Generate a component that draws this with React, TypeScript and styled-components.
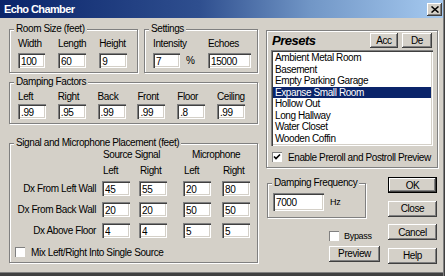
import { Fragment } from "react"
import styled, { createGlobalStyle } from "styled-components"

const presets = [
    "Ambient Metal Room",
    "Basement",
    "Empty Parking Garage",
    "Expanse Small Room",
    "Hollow Out",
    "Long Hallway",
    "Water Closet",
    "Wooden Coffin",
]

const damping = [
    { label: "Left", value: ".99" },
    { label: "Right", value: ".95" },
    { label: "Back", value: ".99" },
    { label: "Front", value: ".99" },
    { label: "Floor", value: ".8" },
    { label: "Ceiling", value: ".99" },
]

const placement = [
    { label: "Dx From Left Wall", values: ["45", "55", "20", "80"] },
    { label: "Dx From Back Wall", values: ["20", "20", "50", "50"] },
    { label: "Dx Above Floor", values: ["4", "4", "5", "5"] },
]

const Check = ({ checked }: { checked?: boolean }) => (
    <CheckBox>
        {checked && (
            <svg width="8" height="8" viewBox="0 0 8 8">
                <path d="M1 3.5 L3 5.5 L7 1.5" stroke="#000" strokeWidth="1.6" fill="none" />
            </svg>
        )}
    </CheckBox>
)

const App = () => {
    return (
        <>
            <GlobalStyle />
            <Window>
                <TitleBar>
                    <Title>Echo Chamber</Title>
                    <CloseButton>
                        <svg width="8" height="7" viewBox="0 0 8 7">
                            <path d="M0.5 0.5 L7.5 6.5 M7.5 0.5 L0.5 6.5" stroke="#000" strokeWidth="1.5" />
                        </svg>
                    </CloseButton>
                </TitleBar>
                <Body>
                    <LeftCol>
                        <TopRow>
                            <Group $w={129}>
                                <Legend>Room Size (feet)</Legend>
                                <FieldRow $gap={13}>
                                    <Field>
                                        <Caption>Width</Caption>
                                        <TextBox $w={27} defaultValue="100" />
                                    </Field>
                                    <Field>
                                        <Caption>Length</Caption>
                                        <TextBox $w={28} defaultValue="60" />
                                    </Field>
                                    <Field>
                                        <Caption>Height</Caption>
                                        <TextBox $w={28} defaultValue="9" />
                                    </Field>
                                </FieldRow>
                            </Group>
                            <Group $w={114}>
                                <Legend>Settings</Legend>
                                <SettingsGrid>
                                    <Caption>Intensity</Caption>
                                    <span />
                                    <Caption>Echoes</Caption>
                                    <TextBox $w={27} defaultValue="7" />
                                    <Unit>%</Unit>
                                    <TextBox $w={43} defaultValue="15000" />
                                </SettingsGrid>
                            </Group>
                        </TopRow>
                        <Group $w={249} $top={3}>
                            <Legend>Damping Factors</Legend>
                            <DampingGrid>
                                {damping.map((d) => (
                                    <Field key={d.label} $gap={1}>
                                        <Caption>{d.label}</Caption>
                                        <TextBox $w={28} defaultValue={d.value} />
                                    </Field>
                                ))}
                            </DampingGrid>
                        </Group>
                        <Group $w={249} $top={13}>
                            <Legend>Signal and Microphone Placement (feet)</Legend>
                            <PlacementGrid>
                                <span />
                                <Heading $span={2} $pad={1}>Source Signal</Heading>
                                <Heading $span={2} $pad={9}>Microphone</Heading>
                                <span />
                                <SubHead>Left</SubHead>
                                <SubHead>Right</SubHead>
                                <SubHead>Left</SubHead>
                                <SubHead>Right</SubHead>
                                {placement.map((row) => (
                                    <Fragment key={row.label}>
                                        <RowLabel>{row.label}</RowLabel>
                                        {row.values.map((v, i) => (
                                            <TextBox key={i} $w={28} defaultValue={v} />
                                        ))}
                                    </Fragment>
                                ))}
                            </PlacementGrid>
                            <CheckRow $pad="8px 0 4px 5px">
                                <Check />
                                <span>Mix Left/Right Into Single Source</span>
                            </CheckRow>
                        </Group>
                    </LeftCol>
                    <RightCol>
                        <PresetsBox>
                            <PresetsHeader>
                                <PresetsTitle>Presets</PresetsTitle>
                                <Button $w={28} $h={15}>Acc</Button>
                                <Button $w={30} $h={15}>De</Button>
                            </PresetsHeader>
                            <List>
                                {presets.map((p, i) => (
                                    <ListItem key={p} $selected={i === 3}>{p}</ListItem>
                                ))}
                            </List>
                            <CheckRow $pad="5px 0 4px 5px">
                                <Check checked />
                                <span>Enable Preroll and Postroll Preview</span>
                            </CheckRow>
                        </PresetsBox>
                        <BottomArea>
                            <LeftPart>
                                <Group $w={99} $left={1}>
                                    <Legend>Damping Frequency</Legend>
                                    <FreqRow>
                                        <TextBox $w={51} $h={18} defaultValue="7000" />
                                        <SmallText>Hz</SmallText>
                                    </FreqRow>
                                </Group>
                                <ActionStack>
                                    <BypassRow>
                                        <Check />
                                        <SmallText>Bypass</SmallText>
                                    </BypassRow>
                                    <Button $w={51} $h={16}>Preview</Button>
                                </ActionStack>
                            </LeftPart>
                            <ButtonColumn>
                                <Button $w={49} $h={16} $default>OK</Button>
                                <Button $w={49} $h={16}>Close</Button>
                                <Button $w={49} $h={16}>Cancel</Button>
                                <Button $w={49} $h={16}>Help</Button>
                            </ButtonColumn>
                        </BottomArea>
                    </RightCol>
                </Body>
            </Window>
        </>
    )
}

const GlobalStyle = createGlobalStyle`
html, body {
    margin: 0;
    padding: 0;
    background: #d4d0c8;
}
body {
    font-family: "Liberation Sans", Arial, sans-serif;
    font-size: 10px;
    letter-spacing: -0.4px;
    color: #000;
}
* {
    box-sizing: border-box;
}
`

const Window = styled.div`
width: 445px;
height: 276px;
background: #d4d0c8;
padding: 0 2px 4px 0;
display: flex;
flex-direction: column;
overflow: hidden;
box-shadow: inset -1px 0 0 #404040, inset -2px 0 0 #808080, inset 0 -3px 0 #404040, inset 0 -4px 0 #808080;
`

const TitleBar = styled.div`
height: 18px;
display: flex;
align-items: center;
justify-content: space-between;
padding: 0 1px 0 4px;
background: linear-gradient(to right, #0a246a 0%, #2f4f8f 45%, #7196c6 70%, #a6caf0 100%);
`

const Title = styled.span`
color: #fff;
font-weight: bold;
font-size: 11px;
letter-spacing: -0.6px;
`

const CloseButton = styled.div`
width: 15px;
height: 13px;
display: flex;
align-items: center;
justify-content: center;
background: #d4d0c8;
box-shadow: inset -1px -1px 0 #404040, inset 1px 1px 0 #fff, inset -2px -2px 0 #808080;
`

const Body = styled.div`
display: flex;
gap: 8px;
padding: 5px 0 0 9px;
`

const LeftCol = styled.div`
width: 249px;
display: flex;
flex-direction: column;
`

const TopRow = styled.div`
display: flex;
gap: 6px;
`

const Group = styled.fieldset<{ $w: number; $top?: number; $left?: number }>`
margin: ${p => p.$top ?? 0}px 0 0 ${p => p.$left ?? 0}px;
padding: 0;
min-width: 0;
width: ${p => p.$w}px;
border: 1px solid #808080;
box-shadow: inset 1px 1px 0 #fff, 1px 1px 0 #fff;
`

const Legend = styled.legend`
margin-left: 4px;
padding: 0 2px;
line-height: 12px;
background: #d4d0c8;
white-space: nowrap;
`

const Caption = styled.div`
line-height: 12px;
white-space: nowrap;
`

const FieldRow = styled.div<{ $gap: number }>`
display: flex;
gap: ${p => p.$gap}px;
padding: 3px 0 4px 8px;
`

const Field = styled.div<{ $gap?: number }>`
display: flex;
flex-direction: column;
gap: ${p => p.$gap ?? 3}px;
`

const TextBox = styled.input<{ $w: number; $h?: number }>`
width: ${p => p.$w}px;
height: ${p => p.$h ?? 15}px;
margin: 0;
border: none;
padding: 1px 3px 0;
font: inherit;
letter-spacing: inherit;
color: #000;
background: #fff;
outline: none;
box-shadow: inset 1px 1px 0 #808080, inset 2px 2px 0 #404040, inset -1px -1px 0 #fff, inset -2px -2px 0 #d4d0c8;
`

const SettingsGrid = styled.div`
display: grid;
grid-template-columns: 27px 28px 43px;
row-gap: 3px;
padding: 3px 0 4px 8px;
`

const Unit = styled.span`
padding-left: 6px;
line-height: 15px;
`

const DampingGrid = styled.div`
display: grid;
grid-template-columns: repeat(6, 28px);
column-gap: 11.8px;
padding: 3px 0 4px 8px;
`

const PlacementGrid = styled.div`
display: grid;
grid-template-columns: 92px 37px 44px 39px 29px;
grid-template-rows: 12px 16px 19px 21px 21px;
align-items: end;
`

const Heading = styled.div<{ $span: number; $pad: number }>`
grid-column: span ${p => p.$span};
padding-left: ${p => p.$pad}px;
line-height: 12px;
white-space: nowrap;
`

const SubHead = styled.div`
line-height: 12px;
padding-left: 1px;
`

const RowLabel = styled.div`
line-height: 15px;
text-align: right;
padding-right: 6px;
white-space: nowrap;
`

const CheckRow = styled.div<{ $pad: string }>`
display: flex;
align-items: center;
gap: 6px;
height: 12px;
box-sizing: content-box;
padding: ${p => p.$pad};
white-space: nowrap;
`

const CheckBox = styled.div`
width: 10px;
height: 10px;
flex: none;
display: flex;
align-items: center;
justify-content: center;
background: #fff;
box-shadow: inset 1px 1px 0 #808080, inset -1px -1px 0 #fff;
`

const RightCol = styled.div`
width: 172px;
display: flex;
flex-direction: column;
`

const PresetsBox = styled.div`
margin-top: 7px;
border: 1px solid #808080;
box-shadow: inset 1px 1px 0 #fff, 1px 1px 0 #fff;
`

const PresetsHeader = styled.div`
display: flex;
align-items: center;
gap: 4px;
padding: 2px 5px 0 5px;
`

const PresetsTitle = styled.span`
flex: 1;
font-size: 13px;
font-weight: bold;
font-style: italic;
letter-spacing: -0.5px;
`

const Button = styled.div<{ $w: number; $h: number; $default?: boolean }>`
width: ${p => p.$w}px;
height: ${p => p.$h}px;
flex: none;
display: flex;
align-items: center;
justify-content: center;
background: #d4d0c8;
border: ${p => (p.$default ? "1px solid #000" : "none")};
box-shadow: inset -1px -1px 0 #404040, inset 1px 1px 0 #fff, inset -2px -2px 0 #808080;
`

const List = styled.div`
margin: 2px 4px 0;
height: 96px;
padding: 2px;
background: #fff;
box-shadow: inset 1px 1px 0 #808080, inset 2px 2px 0 #404040, inset -1px -1px 0 #fff, inset -2px -2px 0 #d4d0c8;
`

const ListItem = styled.div<{ $selected?: boolean }>`
line-height: 11.5px;
padding-left: 2px;
white-space: nowrap;
background: ${p => (p.$selected ? "#0a246a" : "transparent")};
color: ${p => (p.$selected ? "#fff" : "#000")};
`

const BottomArea = styled.div`
display: flex;
gap: 7px;
margin-top: 9px;
`

const LeftPart = styled.div`
flex: 1;
display: flex;
flex-direction: column;
`

const FreqRow = styled.div`
display: flex;
align-items: center;
gap: 6px;
padding: 4px 0 6px 5px;
`

const SmallText = styled.span`
font-size: 9px;
letter-spacing: -0.3px;
`

const ActionStack = styled.div`
align-self: flex-end;
width: 52px;
margin-top: 12px;
display: flex;
flex-direction: column;
gap: 3.5px;
`

const BypassRow = styled.div`
display: flex;
align-items: center;
gap: 5px;
height: 12px;
`

const ButtonColumn = styled.div`
width: 49px;
margin-right: 1px;
display: flex;
flex-direction: column;
gap: 7.5px;
`

export default App
